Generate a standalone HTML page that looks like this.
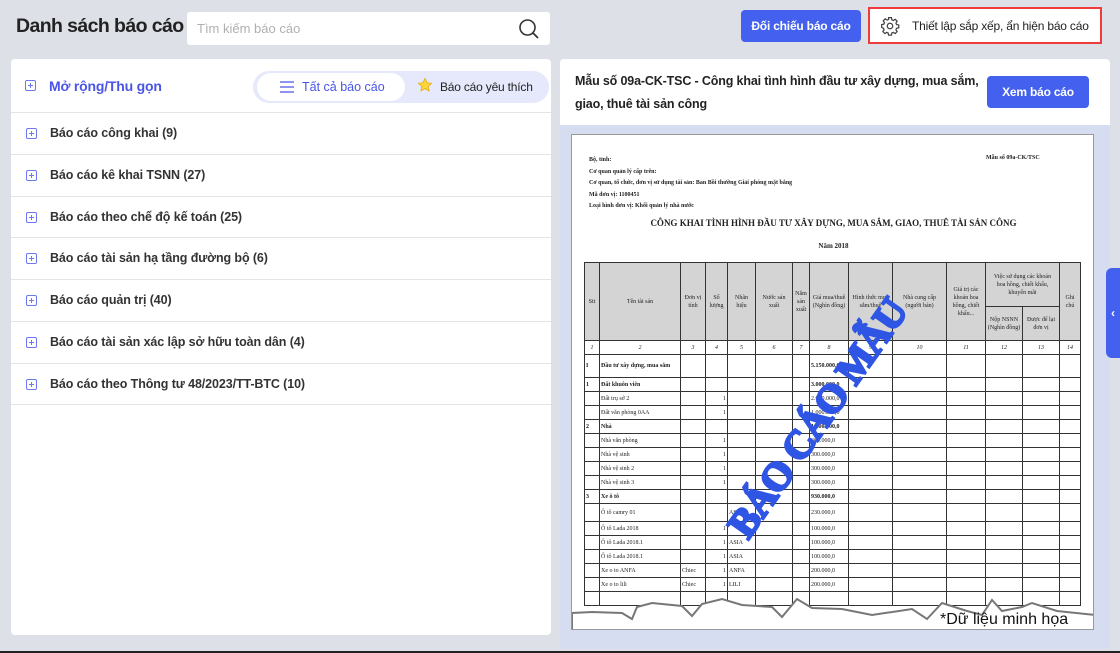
<!DOCTYPE html>
<html><head><meta charset="utf-8"><style>
*{box-sizing:border-box;margin:0;padding:0}
body{width:1120px;height:653px;overflow:hidden;background:#dde0e6;font-family:"Liberation Sans",Arial,sans-serif;position:relative;color:#222}
.abs{position:absolute}
.title{left:16px;top:15px;font-size:19.5px;font-weight:bold;color:#222;letter-spacing:-0.6px;white-space:nowrap}
.search{left:187px;top:12px;width:363px;height:33px;background:#fff;border-radius:3px;font-size:13px;color:#b0b0b0;padding:9px 10px}
.btn{background:#4361ee;color:#fff;font-weight:bold;font-size:12px;border-radius:4px;text-align:center;white-space:nowrap;letter-spacing:-0.2px}
.left{left:11px;top:59px;width:540px;height:576px;background:#fff;border-radius:4px}
.row{position:absolute;left:0;width:540px;height:42px;border-top:1px solid #e2e4e8;font-size:12.5px;font-weight:bold;color:#333;letter-spacing:-0.1px}
.row span{position:absolute;left:39px;top:13px}
.plus{position:absolute;width:11px;height:11px;border:1.3px solid #6b78f0;border-radius:2px}
.plus:before{content:"";position:absolute;left:2px;top:4px;width:5px;height:1.3px;background:#6b78f0}
.plus:after{content:"";position:absolute;left:4px;top:2px;width:1.3px;height:5px;background:#6b78f0}
.right{left:560px;top:59px;width:550px;height:590px;background:#d6ddf0;border-radius:4px}
table{border-collapse:collapse;font-family:"Liberation Serif",serif;font-size:6px;table-layout:fixed}
td{border:1px solid #333;padding:0 1px;overflow:hidden;white-space:nowrap;height:14px;line-height:8px}
</style></head><body>
<div class="abs title">Danh sách báo cáo</div>
<div class="abs search">Tìm kiếm báo cáo
<svg class="abs" style="right:10px;top:6px" width="22" height="22" viewBox="0 0 22 22"><circle cx="9.5" cy="9.5" r="7.5" fill="none" stroke="#333" stroke-width="1.6"/><path d="M15 15l5 5" stroke="#333" stroke-width="1.8"/></svg></div>
<div class="abs btn" style="left:741px;top:10px;width:120px;height:32px;line-height:32px">Đối chiếu báo cáo</div>
<div class="abs" style="left:868px;top:7px;width:234px;height:37px;border:2px solid #ef3b3b;background:#fff;font-size:12px;color:#222;white-space:nowrap">
<svg class="abs" style="left:10px;top:7px" width="20" height="20" viewBox="0 0 24 24"><path fill="none" stroke="#444" stroke-width="1.5" d="M10.3 2h3.4l.5 2.6 1.8.8 2.2-1.5 2.4 2.4-1.5 2.2.8 1.8 2.6.5v3.4l-2.6.5-.8 1.8 1.5 2.2-2.4 2.4-2.2-1.5-1.8.8-.5 2.6h-3.4l-.5-2.6-1.8-.8-2.2 1.5-2.4-2.4 1.5-2.2-.8-1.8L2 13.7v-3.4l2.6-.5.8-1.8-1.5-2.2 2.4-2.4 2.2 1.5 1.8-.8z"/><circle cx="12" cy="12" r="3.3" fill="none" stroke="#444" stroke-width="1.5"/></svg>
<span class="abs" style="left:42px;top:10px;letter-spacing:-0.2px">Thiết lập sắp xếp, ẩn hiện báo cáo</span></div>

<div class="abs left">
<div class="plus" style="left:14px;top:21px"></div>
<span class="abs" style="left:38px;top:19px;font-size:14px;color:#4a55e8;font-weight:bold;letter-spacing:-0.2px">Mở rộng/Thu gọn</span>
<div class="abs" style="left:242px;top:12px;width:296px;height:32px;background:#e6e9fb;border-radius:16px"></div>
<div class="abs" style="left:246px;top:14px;width:148px;height:28px;background:#fff;border-radius:14px;font-size:12.5px;color:#4a55e8">
<svg class="abs" style="left:23px;top:8px" width="14" height="12" viewBox="0 0 14 12"><path d="M0 1h14M0 6h14M0 11h14" stroke="#4a55e8" stroke-width="1.3"/></svg>
<span class="abs" style="left:45px;top:7px">Tất cả báo cáo</span></div>
<svg class="abs" style="left:406px;top:18px" width="16" height="16" viewBox="0 0 24 24"><path d="M12 2l3 6.5 7 .8-5.2 4.8 1.5 7L12 17.5 5.7 21l1.5-7L2 9.3l7-.8z" fill="#ffd43b" stroke="#e0a800" stroke-width="1"/></svg>
<span class="abs" style="left:429px;top:21px;font-size:12px;color:#222;letter-spacing:-0.2px">Báo cáo yêu thích</span>
<div class="row" style="top:53px"><div class="plus" style="left:15px;top:15px"></div><span>Báo cáo công khai (9)</span></div>
<div class="row" style="top:95px"><div class="plus" style="left:15px;top:15px"></div><span>Báo cáo kê khai TSNN (27)</span></div>
<div class="row" style="top:137px"><div class="plus" style="left:15px;top:15px"></div><span>Báo cáo theo chế độ kế toán (25)</span></div>
<div class="row" style="top:178px"><div class="plus" style="left:15px;top:15px"></div><span>Báo cáo tài sản hạ tầng đường bộ (6)</span></div>
<div class="row" style="top:220px"><div class="plus" style="left:15px;top:15px"></div><span>Báo cáo quản trị (40)</span></div>
<div class="row" style="top:262px"><div class="plus" style="left:15px;top:15px"></div><span>Báo cáo tài sản xác lập sở hữu toàn dân (4)</span></div>
<div class="row" style="top:304px;border-bottom:1px solid #e2e4e8"><div class="plus" style="left:15px;top:15px"></div><span>Báo cáo theo Thông tư 48/2023/TT-BTC (10)</span></div>
</div>

<div class="abs right">
<div class="abs" style="left:0;top:0;width:550px;height:66px;background:#fff;border-radius:4px 4px 0 0"></div>
<div class="abs" style="left:15px;top:11px;width:410px;font-size:12.5px;font-weight:bold;line-height:23px;color:#222;letter-spacing:-0.15px">Mẫu số 09a-CK-TSC - Công khai tình hình đầu tư xây dựng, mua sắm, giao, thuê tài sản công</div>
<div class="abs btn" style="left:427px;top:17px;width:102px;height:32px;line-height:32px">Xem báo cáo</div>
</div>
<div class="abs" style="left:1106px;top:268px;width:14px;height:90px;background:#4361ee;border-radius:6px 0 0 6px;color:#fff;font-size:12px;font-weight:bold;line-height:90px;text-align:center">‹</div>

<div class="abs" style="left:571px;top:134px;width:523px;height:496px;background:#fff;border:1px solid #999;overflow:hidden">
<div class="abs" style="left:17px;top:20px;font-family:'Liberation Serif',serif;font-size:6px;font-weight:bold;line-height:11.5px">Bộ, tỉnh:<br>Cơ quan quản lý cấp trên:<br>Cơ quan, tổ chức, đơn vị sử dụng tài sản: Ban Bồi thường Giải phóng mặt bằng<br>Mã đơn vị: 1100451<br>Loại hình đơn vị: Khối quản lý nhà nước</div>
<div class="abs" style="left:414px;top:20px;font-family:'Liberation Serif',serif;font-size:6px;font-weight:bold">Mẫu số 09a-CK/TSC</div>
<div class="abs" style="left:0;width:523px;top:83px;text-align:center;font-family:'Liberation Serif',serif;font-size:9px;font-weight:bold">CÔNG KHAI TÌNH HÌNH ĐẦU TƯ XÂY DỰNG, MUA SẮM, GIAO, THUÊ TÀI SẢN CÔNG</div>
<div class="abs" style="left:0;width:523px;top:107px;text-align:center;font-family:'Liberation Serif',serif;font-size:7px;font-weight:bold">Năm 2018</div>
<table class="abs" style="left:12px;top:127px;width:496px">
<colgroup><col style="width:15px"><col style="width:81px"><col style="width:25px"><col style="width:22px"><col style="width:28px"><col style="width:37px"><col style="width:17px"><col style="width:39px"><col style="width:44px"><col style="width:54px"><col style="width:39px"><col style="width:37px"><col style="width:37px"><col style="width:21px"></colgroup>
<tr style="background:#d4d4d4;text-align:center"><td rowspan="2" style="height:78px">Stt</td><td rowspan="2">Tên tài sản</td><td rowspan="2">Đơn vị<br>tính</td><td rowspan="2">Số<br>lượng</td><td rowspan="2">Nhãn<br>hiệu</td><td rowspan="2">Nước sản<br>xuất</td><td rowspan="2">Năm<br>sản<br>xuất</td><td rowspan="2">Giá mua/thuê<br>(Nghìn đồng)</td><td rowspan="2">Hình thức mua<br>sắm/thuê</td><td rowspan="2">Nhà cung cấp<br>(người bán)</td><td rowspan="2">Giá trị các<br>khoản hoa<br>hồng, chiết<br>khấu...</td><td colspan="2" style="height:44px">Việc sử dụng các khoản<br>hoa hồng, chiết khấu,<br>khuyến mãi</td><td rowspan="2">Ghi<br>chú</td></tr>
<tr style="background:#d4d4d4;text-align:center"><td style="height:34px">Nộp NSNN<br>(Nghìn đồng)</td><td>Được để lại<br>đơn vị</td></tr>
<tr style="text-align:center;font-style:italic"><td>1</td><td>2</td><td>3</td><td>4</td><td>5</td><td>6</td><td>7</td><td>8</td><td>9</td><td>10</td><td>11</td><td>12</td><td>13</td><td>14</td></tr>
<tr style="font-weight:bold"><td style="height:23px">I</td><td>Đầu tư xây dựng, mua sắm</td><td></td><td></td><td></td><td></td><td></td><td>5.150.000,0</td><td></td><td></td><td></td><td></td><td></td><td></td></tr>
<tr style="font-weight:bold"><td>1</td><td>Đất khuôn viên</td><td></td><td></td><td></td><td></td><td></td><td>3.000.000,0</td><td></td><td></td><td></td><td></td><td></td><td></td></tr>
<tr><td></td><td>Đất trụ sở 2</td><td></td><td style="text-align:right">1</td><td></td><td></td><td></td><td>2.000.000,0</td><td></td><td></td><td></td><td></td><td></td><td></td></tr>
<tr><td></td><td>Đất văn phòng 0AA</td><td></td><td style="text-align:right">1</td><td></td><td></td><td></td><td>1.000.000,0</td><td></td><td></td><td></td><td></td><td></td><td></td></tr>
<tr style="font-weight:bold"><td>2</td><td>Nhà</td><td></td><td></td><td></td><td></td><td></td><td>1.200.000,0</td><td></td><td></td><td></td><td></td><td></td><td></td></tr>
<tr><td></td><td>Nhà văn phòng</td><td></td><td style="text-align:right">1</td><td></td><td></td><td></td><td>300.000,0</td><td></td><td></td><td></td><td></td><td></td><td></td></tr>
<tr><td></td><td>Nhà vệ sinh</td><td></td><td style="text-align:right">1</td><td></td><td></td><td></td><td>300.000,0</td><td></td><td></td><td></td><td></td><td></td><td></td></tr>
<tr><td></td><td>Nhà vệ sinh 2</td><td></td><td style="text-align:right">1</td><td></td><td></td><td></td><td>300.000,0</td><td></td><td></td><td></td><td></td><td></td><td></td></tr>
<tr><td></td><td>Nhà vệ sinh 3</td><td></td><td style="text-align:right">1</td><td></td><td></td><td></td><td>300.000,0</td><td></td><td></td><td></td><td></td><td></td><td></td></tr>
<tr style="font-weight:bold"><td>3</td><td>Xe ô tô</td><td></td><td></td><td></td><td></td><td></td><td>930.000,0</td><td></td><td></td><td></td><td></td><td></td><td></td></tr>
<tr><td style="height:18px"></td><td>Ô tô camry 01</td><td></td><td></td><td>ASIA</td><td></td><td></td><td>230.000,0</td><td></td><td></td><td></td><td></td><td></td><td></td></tr>
<tr><td></td><td>Ô tô Lada 2018</td><td></td><td style="text-align:right">1</td><td></td><td></td><td></td><td>100.000,0</td><td></td><td></td><td></td><td></td><td></td><td></td></tr>
<tr><td></td><td>Ô tô Lada 2018.1</td><td></td><td style="text-align:right">1</td><td>ASIA</td><td></td><td></td><td>100.000,0</td><td></td><td></td><td></td><td></td><td></td><td></td></tr>
<tr><td></td><td>Ô tô Lada 2018.1</td><td></td><td style="text-align:right">1</td><td>ASIA</td><td></td><td></td><td>100.000,0</td><td></td><td></td><td></td><td></td><td></td><td></td></tr>
<tr><td></td><td>Xe o to ANFA</td><td>Chiec</td><td style="text-align:right">1</td><td>ANFA</td><td></td><td></td><td>200.000,0</td><td></td><td></td><td></td><td></td><td></td><td></td></tr>
<tr><td></td><td>Xe o to lili</td><td>Chiec</td><td style="text-align:right">1</td><td>LILI</td><td></td><td></td><td>200.000,0</td><td></td><td></td><td></td><td></td><td></td><td></td></tr>
<tr><td></td><td></td><td></td><td></td><td></td><td></td><td></td><td></td><td></td><td></td><td></td><td></td><td></td><td></td></tr>
</table>
<svg class="abs" style="left:0;top:460px" width="523" height="40" viewBox="0 0 523 40"><path d="M0 18 L20 17 L50 18 L60 24 L65 12 L80 8 L110 11 L120 21 L130 9 L150 4 L170 10 L200 12 L210 22 L225 4 L240 13 L270 14 L300 20 L340 14 L355 24 L370 8 L395 16 L410 20 L420 5 L430 16 L450 12 L460 8 L485 16 L523 20 L523 40 L0 40Z" fill="#fff" stroke="#777" stroke-width="2"/></svg>
<div class="abs" style="left:368px;top:476px;font-size:16px;color:#111">*Dữ liệu minh họa</div>
<div class="abs" style="left:116px;top:280px;width:230px;text-align:center;transform:rotate(-55deg);font-family:'Liberation Serif',serif;font-weight:bold;font-size:40px;color:#2f55e4;-webkit-text-stroke:2.5px #2f55e4;white-space:nowrap;letter-spacing:-1px">BÁO CÁO MẪU</div>
</div>
<div class="abs" style="left:0;top:651px;width:1120px;height:2px;background:#222"></div>
</body></html>
